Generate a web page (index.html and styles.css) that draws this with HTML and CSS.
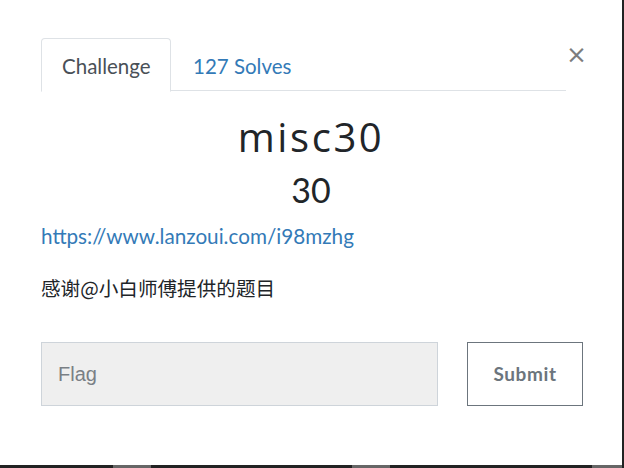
FILE: index.html
```html
<!DOCTYPE html>
<html>
<head>
<meta charset="utf-8">
<link rel="stylesheet" href="styles.css">
</head>
<body>
<div class="modal">
  <div class="header">
    <div class="tabs">
      <div class="tab active">Challenge</div>
      <div class="tab link">127 Solves</div>
    </div>
    <div class="close">&times;</div>
  </div>
  <h2 class="title">misc30</h2>
  <h3 class="points">30</h3>
  <p class="desc"><a href="#">https://www.lanzoui.com/i98mzhg</a></p>
  <p class="desc cn">感谢@小白师傅提供的题目</p>
  <div class="form">
    <div class="input">Flag</div>
    <div class="btn">Submit</div>
  </div>
</div>
<div class="under">
  <span class="b1"></span><span class="b2"></span><span class="b3"></span><span class="b4"></span><span class="b5"></span><span class="b6"></span>
</div>
</body>
</html>
```
FILE: styles.css
```css
html, body {
  margin: 0;
  padding: 0;
  background: #222;
  overflow: hidden;
}
body {
  width: 624px;
  height: 468px;
  font-family: Lato, "Noto Sans CJK SC", sans-serif;
}
.modal {
  width: 622px;
  height: 465px;
  background: #fff;
  box-sizing: border-box;
  padding: 38px 39px 0 41px;
}
.header {
  display: flex;
  align-items: flex-start;
}
.tabs {
  flex: 1;
  display: flex;
  border-bottom: 1px solid #dee2e6;
  height: 53px;
  box-sizing: border-box;
}
.tab {
  font-size: 20.5px;
  line-height: 56px;
  height: 53px;
  box-sizing: border-box;
}
.tab.active {
  color: #495057;
  width: 130px;
  border: 1px solid #dee2e6;
  border-bottom: 1px solid #fff;
  border-radius: 4px 4px 0 0;
  background: #fff;
  height: 54px;
  line-height: 54px;
  padding: 0 0 0 20px;
}
.tab.link {
  color: #337ab7;
  padding-left: 22px;
}
.close {
  width: 17px;
  font-size: 25px;
  line-height: 26px;
  color: #7d7d7d;
  margin-top: 4px;
  font-family: "DejaVu Sans", sans-serif;
  font-weight: 400;
  text-align: center;
}
.title {
  margin: 21px 0 0 0;
  text-align: center;
  font-family: "Open Sans", sans-serif;
  font-weight: 400;
  font-size: 40px;
  letter-spacing: 2.6px;
  line-height: 50px;
  color: #212529;
  padding-right: 2px;
}
.points {
  margin: 8px 0 0 0;
  text-align: center;
  font-weight: 400;
  font-size: 34px;
  line-height: 40px;
  color: #212529;
  padding-right: 2px;
}
.desc {
  margin: 12px 0 0 0;
  font-size: 20.7px;
  line-height: 28px;
  color: #212529;
}
.desc a {
  color: #337ab7;
  text-decoration: none;
}
.desc.cn {
  margin-top: 24px;
  font-family: "Noto Sans CJK SC", sans-serif;
  font-size: 19.6px;
}
.form {
  margin-top: 40px;
  display: flex;
  gap: 29px;
}
.input {
  width: 397px;
  height: 64px;
  box-sizing: border-box;
  background: #efefef;
  border: 1px solid #ced4da;
  font-family: "Liberation Sans", Arial, sans-serif;
  font-size: 20px;
  color: #7a7f85;
  padding-left: 16px;
  line-height: 62px;
}
.btn {
  width: 116px;
  height: 64px;
  box-sizing: border-box;
  border: 1px solid #6c757d;
  color: #6c757d;
  font-weight: 700;
  font-size: 19px;
  letter-spacing: 0.6px;
  text-align: center;
  line-height: 62px;
}
.under {
  height: 3px;
  display: flex;
}
.under span { display: block; height: 3px; }
.b1 { width: 113px; background: #222; }
.b2 { width: 38px; background: #666; }
.b3 { width: 201px; background: #222; }
.b4 { width: 38px; background: #666; }
.b5 { width: 202px; background: #222; }
.b6 { width: 30px; background: #666; }
```
